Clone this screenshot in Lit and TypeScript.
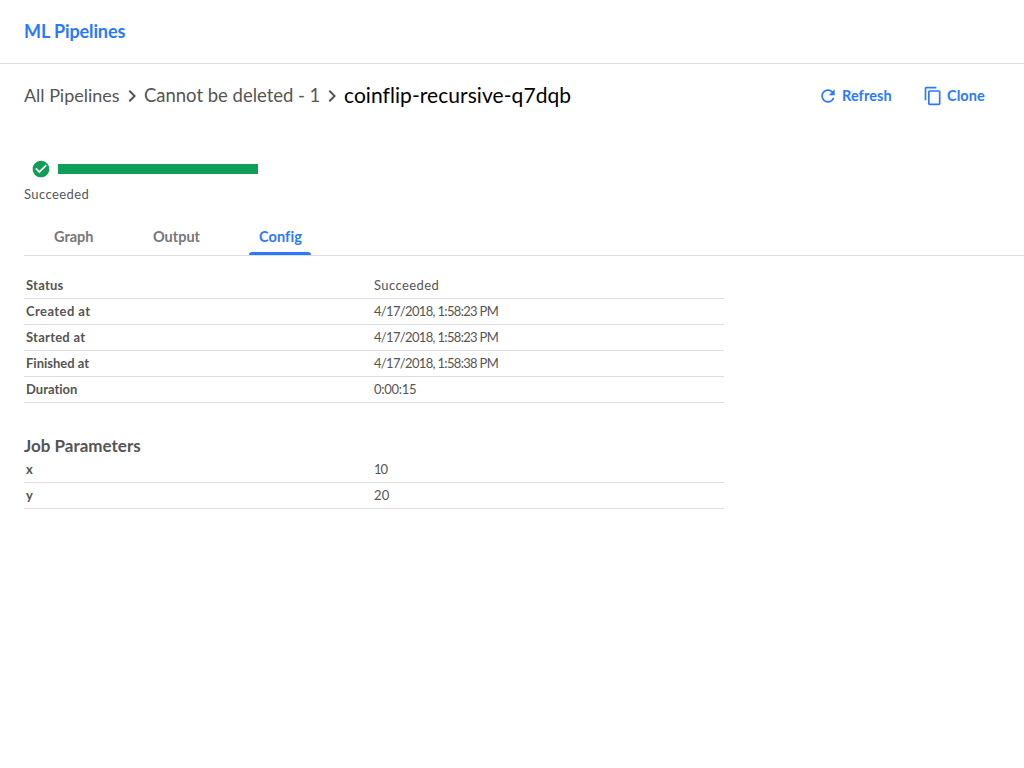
import { LitElement, html, css, svg } from "lit";
import { customElement } from "lit/decorators.js";

type Row = { key: string; value: string; keySpacing: number; valueSpacing: number };

const details: Row[] = [
  { key: "Status", value: "Succeeded", keySpacing: 0.25, valueSpacing: 0.42 },
  { key: "Created at", value: "4/17/2018, 1:58:23 PM", keySpacing: 0.42, valueSpacing: -0.67 },
  { key: "Started at", value: "4/17/2018, 1:58:23 PM", keySpacing: 0.25, valueSpacing: -0.67 },
  { key: "Finished at", value: "4/17/2018, 1:58:38 PM", keySpacing: 0, valueSpacing: -0.67 },
  { key: "Duration", value: "0:00:15", keySpacing: 0, valueSpacing: -0.28 },
];

const parameters: Row[] = [
  { key: "x", value: "10", keySpacing: 0, valueSpacing: -1 },
  { key: "y", value: "20", keySpacing: 0, valueSpacing: 0.2 },
];

const icon = (size: number, d: string) =>
  html`<svg width=${size} height=${size} viewBox="0 0 24 24" fill="currentColor">${svg`<path d=${d}></path>`}</svg>`;

const chevron = icon(24, "M10 6 8.59 7.41 13.17 12l-4.58 4.59L10 18l6-6z");
const refresh = icon(20, "M17.65 6.35C16.2 4.9 14.21 4 12 4c-4.42 0-7.99 3.58-7.99 8s3.57 8 7.99 8c3.73 0 6.84-2.55 7.73-6h-2.08c-.82 2.33-3.04 4-5.65 4-3.31 0-6-2.69-6-6s2.69-6 6-6c1.66 0 3.14.69 4.22 1.78L13 11h7V4l-2.35 2.35z");
const copy = icon(20, "M16 1H4c-1.1 0-2 .9-2 2v14h2V3h12V1zm3 4H8c-1.1 0-2 .9-2 2v14c0 1.1.9 2 2 2h11c1.1 0 2-.9 2-2V7c0-1.1-.9-2-2-2zm0 16H8V7h11v14z");
const check = icon(20, "M12 2C6.48 2 2 6.48 2 12s4.48 10 10 10 10-4.48 10-10S17.52 2 12 2zm-2 15-5-5 1.41-1.41L10 14.17l7.59-7.59L19 8l-9 9z");

@customElement("app-root")
export class AppRoot extends LitElement {
  static styles = css`
    :host {
      display: block;
      box-sizing: border-box;
      height: 768px;
      overflow: hidden;
      background: #fff;
      color: #555;
      font-family: Lato, "Open Sans", sans-serif;
      font-size: 13px;
      font-variant-ligatures: none;
    }
    svg { display: block; flex: none; }
    header {
      box-sizing: border-box;
      height: 64px;
      padding-left: 24px;
      border-bottom: 1px solid #ddd;
      color: #2979ff;
      font-size: 18px;
      font-weight: 700;
      line-height: 63px;
      letter-spacing: -0.1px;
    }
    .toolbar {
      display: flex;
      align-items: center;
      height: 64px;
      padding: 0 40px 0 24px;
      white-space: nowrap;
    }
    .crumb { padding-bottom: 2px; font-size: 18px; line-height: 24px; }
    .all { width: 96px; letter-spacing: -0.03px; }
    .parent { width: 176px; font-size: 18.5px; letter-spacing: -0.02px; }
    .current { padding-bottom: 3px; color: #000; font-size: 21px; letter-spacing: 0.06px; }
    .actions {
      display: flex;
      margin-left: auto;
      color: #2979ff;
      font-size: 14.5px;
      font-weight: 700;
      line-height: 20px;
    }
    .action { display: flex; gap: 4px; }
    .refresh { width: 105px; letter-spacing: 0.07px; }
    .clone { width: 61px; letter-spacing: 0.05px; }
    .progress {
      display: flex;
      align-items: center;
      gap: 7px;
      height: 20px;
      margin-top: 31px;
      padding-left: 31px;
      color: #0f9d58;
    }
    .bar { width: 200px; height: 10px; background: #0f9d58; }
    .state {
      margin-top: 5px;
      padding-left: 24px;
      line-height: 20px;
      letter-spacing: 0.42px;
    }
    .tabs {
      display: flex;
      height: 37px;
      margin: 14px 0 0 24px;
      border-bottom: 1px solid #ddd;
      color: #777;
      font-size: 14.5px;
      font-weight: 700;
      line-height: 37px;
    }
    .tab { box-sizing: border-box; padding-left: 10px; }
    .graph { width: 99px; margin-left: 20px; }
    .output { width: 106px; }
    .config {
      width: 62px;
      color: #2979ff;
      letter-spacing: 0.1px;
    }
    .underline {
      height: 3px;
      margin: -3px 0 0 -10px;
      border-radius: 3px 3px 0 0;
      background: #2979ff;
    }
    .table { width: 700px; margin-left: 24px; line-height: 25px; }
    .details { margin-top: 17px; }
    .row {
      display: grid;
      grid-template-columns: 348px 1fr;
      box-sizing: border-box;
      height: 26px;
      padding-left: 2px;
      border-bottom: 1px solid #ddd;
    }
    .key { font-weight: 700; }
    h2 {
      margin: 33px 0 0 24px;
      padding-bottom: 1px;
      font-size: 17px;
      font-weight: 700;
      line-height: 20px;
    }
  `;

  private rows(rows: Row[]) {
    return rows.map(
      (r) => html`<div class="row">
        <span class="key" style="letter-spacing:${r.keySpacing}px">${r.key}</span>
        <span style="letter-spacing:${r.valueSpacing}px">${r.value}</span>
      </div>`
    );
  }

  render() {
    return html`
      <header>ML Pipelines</header>
      <div class="toolbar">
        <span class="crumb all">All Pipelines</span>${chevron}
        <span class="crumb parent">Cannot be deleted - 1</span>${chevron}
        <span class="crumb current">coinflip-recursive-q7dqb</span>
        <div class="actions">
          <span class="action refresh">${refresh}Refresh</span>
          <span class="action clone">${copy}Clone</span>
        </div>
      </div>
      <div class="progress">${check}<div class="bar"></div></div>
      <div class="state">Succeeded</div>
      <nav class="tabs">
        <span class="tab graph">Graph</span>
        <span class="tab output">Output</span>
        <span class="tab config">Config<div class="underline"></div></span>
      </nav>
      <div class="table details">${this.rows(details)}</div>
      <h2>Job Parameters</h2>
      <div class="table">${this.rows(parameters)}</div>
    `;
  }
}
